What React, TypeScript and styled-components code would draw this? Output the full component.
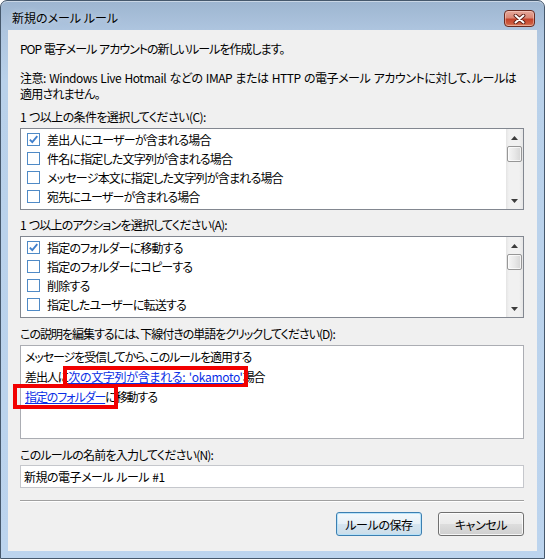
import React from 'react';
import styled, { createGlobalStyle } from 'styled-components';

const GlobalStyle = createGlobalStyle`
  html, body {
    margin: 0;
    padding: 0;
    background: #ffffff;
  }
  body {
    font-family: "Noto Sans CJK JP", "Noto Sans", sans-serif;
    font-size: 12px;
    color: #000000;
    font-feature-settings: "palt";
  }
`;

const Window = styled.div`
  box-sizing: border-box;
  width: 545px;
  height: 559px;
  display: flex;
  flex-direction: column;
  border: 1px solid #46586c;
  border-radius: 7px 7px 0 0;
  background: linear-gradient(to bottom, #9db5d0 0px, #aec5df 29px, #b9d1ea 80px, #bcd4ee 100%);
  box-shadow: inset 0 1px 0 rgba(255, 255, 255, 0.45);
`;

const TitleBar = styled.div`
  height: 29px;
  display: flex;
  align-items: flex-start;
  padding: 0 9px 0 11px;
`;

const Title = styled.div`
  flex: 1;
  margin-top: 9px;
  line-height: 16px;
  text-shadow: 0 0 6px rgba(255, 255, 255, 0.6);
`;

const CloseButton = styled.div`
  box-sizing: border-box;
  margin-top: 9px;
  width: 31px;
  height: 17px;
  display: flex;
  align-items: center;
  justify-content: center;
  border: 1px solid #6a2a20;
  border-radius: 4px;
  background: linear-gradient(to bottom, #e6a99b 0%, #d98775 45%, #c4432b 55%, #cd5c40 85%, #d98a6a 100%);
  box-shadow: inset 0 0 0 1px rgba(255, 220, 210, 0.45);
`;

const Client = styled.div`
  flex: 1;
  margin: 0 7px 7px;
  background: #f0f0f0;
  padding: 11px 13px 0 12px;
  display: flex;
  flex-direction: column;
  letter-spacing: -0.8px;
  word-spacing: 1px;
`;

const Text = styled.div<{ $top?: number; $ls?: number }>`
  line-height: 16px;
  margin-top: ${(p) => p.$top ?? 0}px;
  white-space: nowrap;
  ${(p) => (p.$ls !== undefined ? `letter-spacing: ${p.$ls}px;` : '')}
`;

const ListBox = styled.div<{ $top: number }>`
  box-sizing: border-box;
  height: 82px;
  margin-top: ${(p) => p.$top}px;
  border: 1px solid #828790;
  background: #ffffff;
  display: flex;
`;

const Rows = styled.div`
  flex: 1;
  padding: 1px 0 0 6px;
  overflow: hidden;
`;

const Row = styled.div`
  height: 19px;
  display: flex;
  align-items: center;
  white-space: nowrap;
`;

const CheckBox = styled.span`
  box-sizing: border-box;
  width: 13px;
  height: 13px;
  margin-right: 7px;
  flex: none;
  border: 1px solid #4f8ac6;
  background: #ffffff;
  display: flex;
  align-items: center;
  justify-content: center;
`;

const ScrollBar = styled.div`
  width: 17px;
  display: flex;
  flex-direction: column;
  background: linear-gradient(to right, #e4e4e4, #f1f1f1 3px, #f1f1f1 13px, #e6e6e6);
`;

const ArrowButton = styled.div`
  height: 17px;
  flex: none;
  display: flex;
  align-items: center;
  justify-content: center;
`;

const Thumb = styled.div`
  box-sizing: border-box;
  height: 16px;
  margin: 0 1px;
  flex: none;
  border: 1px solid #979797;
  border-radius: 2px;
  background: linear-gradient(to right, #f6f6f6, #e8e8e8 50%, #d6d6d6);
  box-shadow: inset 0 0 0 1px rgba(255, 255, 255, 0.7);
`;

const Track = styled.div`
  flex: 1;
`;

const DescBox = styled.div`
  box-sizing: border-box;
  height: 94px;
  margin-top: 3px;
  border: 1px solid #abadb3;
  background: #ffffff;
  padding: 1px 4px 0;
  line-height: 20px;
  letter-spacing: -1.1px;
`;

const DescLine = styled.div`
  white-space: nowrap;
`;

const Link = styled.span<{ $ls?: number }>`
  color: #0a2ee6;
  text-decoration: underline;
  ${(p) => (p.$ls !== undefined ? `letter-spacing: ${p.$ls}px;` : '')}
`;

// red call-out frame drawn over a phrase without shifting the text around it
const Mark = styled.span<{ $inner: number; $padL: number; $padR: number }>`
  position: relative;
  z-index: 1;
  display: inline-block;
  line-height: ${(p) => p.$inner}px;
  border: 4px solid #f20000;
  padding: 0 ${(p) => p.$padR}px 0 ${(p) => p.$padL}px;
  margin: -4px ${(p) => -(p.$padR + 4)}px -4px ${(p) => -(p.$padL + 4)}px;
`;

const NameInput = styled.div`
  box-sizing: border-box;
  height: 23px;
  margin-top: 2px;
  border: 1px solid #c5c7cc;
  background: #ffffff;
  padding: 0 3px;
  line-height: 21px;
  letter-spacing: -0.5px;
`;

const Separator = styled.div`
  margin-top: 12px;
  border-top: 1px solid #a0a0a0;
  border-bottom: 1px solid #ffffff;
`;

const ButtonRow = styled.div`
  margin-top: 10px;
  display: flex;
  justify-content: flex-end;
  gap: 16px;
`;

const Button = styled.div<{ $default?: boolean }>`
  box-sizing: border-box;
  width: 86px;
  height: 24px;
  display: flex;
  align-items: center;
  justify-content: center;
  letter-spacing: -0.4px;
  border-radius: 3px;
  border: 1px solid ${(p) => (p.$default ? '#3c7fb1' : '#707070')};
  background: ${(p) =>
    p.$default
      ? 'linear-gradient(to bottom, #f4f9fc 0%, #e8f1f7 48%, #d6e5f0 52%, #cbdde9 100%)'
      : 'linear-gradient(to bottom, #f2f2f2 0%, #ebebeb 48%, #dddddd 52%, #cfcfcf 100%)'};
  box-shadow: inset 0 0 0 1px ${(p) => (p.$default ? 'rgba(180, 225, 250, 0.9)' : 'rgba(255, 255, 255, 0.8)')};
`;

const UpArrow = () => (
  <svg width="7" height="4" viewBox="0 0 7 4">
    <polygon points="0,4 3.5,0 7,4" fill="#3c3c3c" />
  </svg>
);

const DownArrow = () => (
  <svg width="7" height="4" viewBox="0 0 7 4">
    <polygon points="0,0 7,0 3.5,4" fill="#3c3c3c" />
  </svg>
);

const Check = () => (
  <svg width="11" height="11" viewBox="0 0 11 11">
    <path d="M1.8 5.6 L4.3 8.2 L9.3 2.2" fill="none" stroke="#3f7fcc" strokeWidth="1.8" />
  </svg>
);

const CloseGlyph = () => (
  <svg width="13" height="10" viewBox="0 0 13 10">
    <path d="M2.5 1.5 L10.5 8.5 M10.5 1.5 L2.5 8.5" stroke="#5a1d14" strokeWidth="3.8" strokeLinecap="round" />
    <path d="M2.5 1.5 L10.5 8.5 M10.5 1.5 L2.5 8.5" stroke="#ffffff" strokeWidth="2" strokeLinecap="round" />
  </svg>
);

const conditions = [
  { label: '差出人にユーザーが含まれる場合', checked: true },
  { label: '件名に指定した文字列が含まれる場合', checked: false },
  { label: 'メッセージ本文に指定した文字列が含まれる場合', checked: false },
  { label: '宛先にユーザーが含まれる場合', checked: false },
];

const actions = [
  { label: '指定のフォルダーに移動する', checked: true },
  { label: '指定のフォルダーにコピーする', checked: false },
  { label: '削除する', checked: false },
  { label: '指定したユーザーに転送する', checked: false },
];

type Item = { label: string; checked: boolean };

const CheckList: React.FC<{ items: Item[]; top: number }> = ({ items, top }) => (
  <ListBox $top={top}>
    <Rows>
      {items.map((item) => (
        <Row key={item.label}>
          <CheckBox>{item.checked && <Check />}</CheckBox>
          {item.label}
        </Row>
      ))}
    </Rows>
    <ScrollBar>
      <ArrowButton>
        <UpArrow />
      </ArrowButton>
      <Thumb />
      <Track />
      <ArrowButton>
        <DownArrow />
      </ArrowButton>
    </ScrollBar>
  </ListBox>
);

const App: React.FC = () => (
  <>
    <GlobalStyle />
    <Window>
      <TitleBar>
        <Title>新規のメール ルール</Title>
        <CloseButton>
          <CloseGlyph />
        </CloseButton>
      </TitleBar>
      <Client>
        <Text $ls={-1}>POP 電子メール アカウントの新しいルールを作成します。</Text>
        <Text $top={13} $ls={-0.45}>
          注意: Windows Live Hotmail などの IMAP または HTTP の電子メール アカウントに対して、ルールは
        </Text>
        <Text>適用されません。</Text>

        <Text $top={7} $ls={-0.6}>1 つ以上の条件を選択してください(C):</Text>
        <CheckList items={conditions} top={3} />

        <Text $top={7}>1 つ以上のアクションを選択してください(A):</Text>
        <CheckList items={actions} top={3} />

        <Text $top={8} $ls={-1}>この説明を編集するには、下線付きの単語をクリックしてください(D):</Text>
        <DescBox>
          <DescLine>メッセージを受信してから、このルールを適用する</DescLine>
          <DescLine>
            差出人に
            <Mark $inner={13} $padL={1} $padR={1}>
              <Link $ls={-0.3}>次の文字列が含まれる: 'okamoto'</Link>
            </Mark>
            場合
          </DescLine>
          <DescLine>
            <Mark $inner={17} $padL={8} $padR={9}>
              <Link>指定のフォルダー</Link>
            </Mark>
            に移動する
          </DescLine>
        </DescBox>

        <Text $top={8}>このルールの名前を入力してください(N):</Text>
        <NameInput>新規の電子メール ルール #1</NameInput>

        <Separator />
        <ButtonRow>
          <Button $default>ルールの保存</Button>
          <Button>キャンセル</Button>
        </ButtonRow>
      </Client>
    </Window>
  </>
);

export default App;
